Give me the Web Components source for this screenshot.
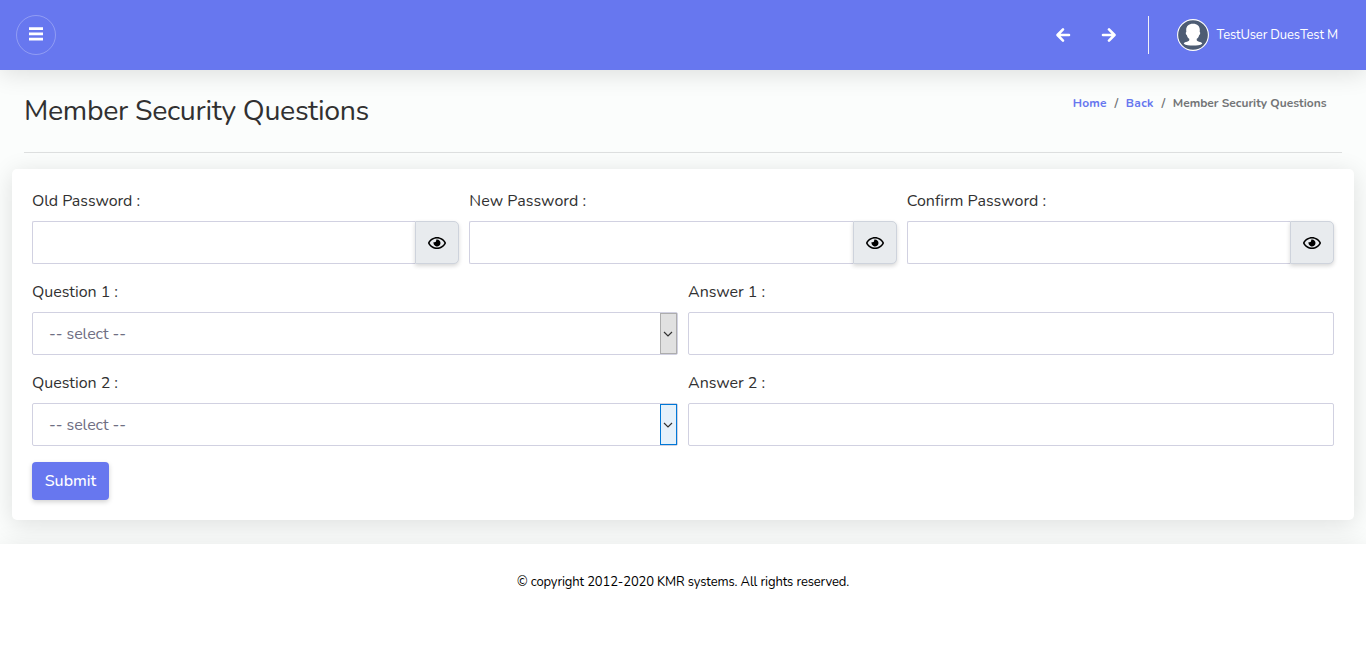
<!DOCTYPE html>
<html lang="en">
<head>
<meta charset="utf-8">
<title>Member Security Questions</title>
<style>
html,body{margin:0;padding:0;background:#fff}
body{font-family:Nunito,Lato,"Open Sans",sans-serif;font-size:16px;line-height:24px;color:#313131;overflow:hidden}
</style>
</head>
<body>
<member-page></member-page>
<script>
const define = (name, html, setup) => {
  const t = document.createElement('template');
  t.innerHTML = html;
  customElements.define(name, class extends HTMLElement {
    connectedCallback() {
      if (this.shadowRoot) return;
      this.attachShadow({mode: 'open'}).appendChild(t.content.cloneNode(true));
      if (setup) setup(this, this.shadowRoot);
    }
  });
};

/* Text tracked so that it fills a given measure in whichever font is present. */
define('tracked-text', `<style>:host{display:inline-block;white-space:pre}</style><slot></slot>`, el => {
  const target = parseFloat(el.getAttribute('measure'));
  const width = el.getBoundingClientRect().width;
  el.style.letterSpacing = ((target - width) / el.textContent.length).toFixed(3) + 'px';
});

define('menu-button', `
<style>:host{display:flex;box-sizing:border-box;width:40px;height:40px;border:1px solid rgba(255,255,255,.27);border-radius:50%;align-items:center;justify-content:center}
svg{display:block;margin-top:-2px}</style>
<svg width="14" height="14" fill="#fff"><path d="M0 .3h14v2.7H0zM0 5.500h14v2.700H0zM0 10.700h14v2.700H0z"/></svg>`);

define('arrow-icon', `
<style>:host{display:block;width:16px;height:16px}:host([right]){transform:scaleX(-1)}svg{display:block}</style>
<svg width="16" height="16" fill="none" stroke="#fff" stroke-width="2.6" stroke-linecap="round" stroke-linejoin="round"><path d="M8 2.4 2.500 8 8 13.600M2.800 8H14"/></svg>`);

define('user-avatar', `
<style>:host{display:block;width:32px;height:32px}svg{display:block}</style>
<svg width="32" height="32"><circle cx="16" cy="16" r="15.4" fill="#4d5c73" stroke="#fff" stroke-width="1.1"/>
<path fill="#fff" d="M16 4.800c4.400 0 6.800 2.400 6.800 6.200 0 .8-.1 1.500-.1 2 .9.200.6 2.500-.6 3.200-.4 1.700-1.300 2.900-2.300 3.600-.3 1.500-.1 2.200 1.600 2.600 2.300.5 3.500 1 3.900 2.300-2 1.400-5.700 1.900-9.300 1.900s-7.300-.5-9.300-1.900c.4-1.300 1.600-1.800 3.900-2.300 1.700-.4 1.900-1.100 1.600-2.600-1-.7-1.900-1.900-2.300-3.600-1.200-.7-1.500-3-.6-3.200 0-.5-.1-1.200-.1-2 0-3.800 2.400-6.200 6.800-6.200z"/></svg>`);

define('top-bar', `
<style>:host{display:flex;box-sizing:border-box;height:70px;padding:0 28px 0 16px;align-items:center;background:#6777ef;color:#fff;box-shadow:0 4px 25px rgba(0,0,0,.12);position:relative}
.nav{display:flex;align-items:center;margin-left:auto}
arrow-icon+arrow-icon{margin-left:30px}
i{width:1px;height:38px;background:#f1f1f8;margin:0 28px 0 31px}
.user{display:flex;align-items:center;gap:7.500px;font-size:13px}</style>
<menu-button></menu-button>
<div class="nav"><arrow-icon></arrow-icon><arrow-icon right></arrow-icon><i></i>
<div class="user"><user-avatar></user-avatar><tracked-text measure="121.5">TestUser DuesTest M</tracked-text></div></div>`);

define('page-heading', `
<style>:host{display:flex;box-sizing:border-box;height:83px;margin:0 24px;border-bottom:1px solid #dee0e0;justify-content:space-between}
h1{margin:21px 0 0;font-weight:400;font-size:28.500px;line-height:40px}
nav{display:flex;margin:24px 15.500px 0 0;font-size:12px;line-height:18px;font-weight:700;color:#737577}
a{color:#6777ef}.s{margin:0 7px;width:5px;text-align:center}</style>
<h1><tracked-text measure="345">Member Security Questions</tracked-text></h1>
<nav><a><tracked-text measure="34">Home</tracked-text></a><span class="s">/</span><a><tracked-text measure="28">Back</tracked-text></a><span class="s">/</span><tracked-text measure="153.7">Member Security Questions</tracked-text></nav>`);

const label = (el, root) => {
  const t = document.createElement('tracked-text');
  t.textContent = el.getAttribute('label');
  t.setAttribute('measure', el.getAttribute('measure'));
  root.querySelector('label').append(t);
};
const fieldCss = `:host{display:block;min-width:0}label{display:block;height:24px;margin-bottom:8px}
.box{display:flex;box-sizing:border-box;height:43px;border:1px solid #d1d1e1;border-radius:2px;background:#fff}`;

define('password-field', `
<style>${fieldCss}
.row{display:flex}.box{flex:1;border-right:0;border-radius:2px 0 0 2px}
.eye{box-sizing:border-box;width:44px;height:43px;display:flex;align-items:center;justify-content:center;background:#e8ebee;border:1px solid #ced3dc;border-radius:0 5px 5px 0;box-shadow:0 2px 4px rgba(0,0,0,.16)}
svg{display:block}</style>
<label></label><div class="row"><div class="box"></div><div class="eye">
<svg width="18" height="16" viewBox="0 0 576 512"><path d="M288 144a110.940 110.940 0 0 0-31.240 5 55.400 55.400 0 0 1 7.240 27 56 56 0 0 1-56 56 55.400 55.400 0 0 1-27-7.240A111.710 111.710 0 1 0 288 144zm284.520 97.400C518.290 135.590 410.930 64 288 64S57.680 135.640 3.480 241.410a32.350 32.350 0 0 0 0 29.190C57.710 376.410 165.070 448 288 448s230.320-71.640 284.520-177.410a32.350 32.350 0 0 0 0-29.190zM288 400c-98.650 0-189.090-55-237.930-144C98.910 167 189.340 112 288 112s189.090 55 237.930 144C477.100 345 386.660 400 288 400z"/></svg></div></div>`, label);

define('answer-field', `<style>${fieldCss}</style><label></label><div class="box"></div>`, label);

define('question-field', `
<style>${fieldCss}
.box{justify-content:space-between;align-items:center;padding-left:16px;color:#6f6f83}
.drop{box-sizing:border-box;width:17px;height:41px;border:1px solid #adadad;background:#e1e1e1;display:flex;align-items:center;justify-content:center;padding-right:1px}
:host([active]) .drop{border-color:#0078d7;background:#e5f1fb}svg{display:block}</style>
<label></label><div class="box"><tracked-text measure="77">-- select --</tracked-text><div class="drop"><svg width="10" height="6" fill="none" stroke="#333" stroke-width="1.2"><path d="M1 1l4 4 4-4"/></svg></div></div>`, label);

define('submit-button', `
<style>:host{display:flex;width:77px;height:38px;align-items:center;justify-content:center;background:#6777ef;color:#fff;border-radius:4px;box-shadow:0 2px 5px rgba(0,0,0,.18);font-weight:500}</style>
<tracked-text measure="51.5">Submit</tracked-text>`);

define('form-card', `
<style>:host{display:block;box-sizing:border-box;height:351px;margin:16px 12px 0;padding:20px;background:#fff;border-radius:5px;box-shadow:0 4px 25px rgba(0,0,0,.12)}
.grid{display:grid;gap:10px;margin-bottom:16px}.three{grid-template-columns:repeat(3,1fr)}.two{grid-template-columns:1fr 1fr}</style>
<div class="grid three"><password-field label="Old Password :" measure="108"></password-field><password-field label="New Password :" measure="117"></password-field><password-field label="Confirm Password :" measure="139.500"></password-field></div>
<div class="grid two"><question-field label="Question 1 :" measure="86"></question-field><answer-field label="Answer 1 :" measure="77"></answer-field></div>
<div class="grid two"><question-field active label="Question 2 :" measure="86"></question-field><answer-field label="Answer 2 :" measure="77"></answer-field></div>
<submit-button></submit-button>`);

define('page-footer', `
<style>:host{display:flex;box-sizing:border-box;height:110px;padding-top:26px;justify-content:center;font-size:13px;color:#000;background:#fff;position:relative;box-shadow:0 4px 25px rgba(0,0,0,.1)}</style>
<tracked-text measure="332">© copyright 2012-2020 KMR systems. All rights reserved.</tracked-text>`);

define('member-page', `
<style>:host{display:block}main{display:flow-root;height:474px;background:#fbfdfc;overflow:hidden}</style>
<top-bar></top-bar><main><page-heading></page-heading><form-card></form-card></main><page-footer></page-footer>`);
</script>
</body>
</html>
